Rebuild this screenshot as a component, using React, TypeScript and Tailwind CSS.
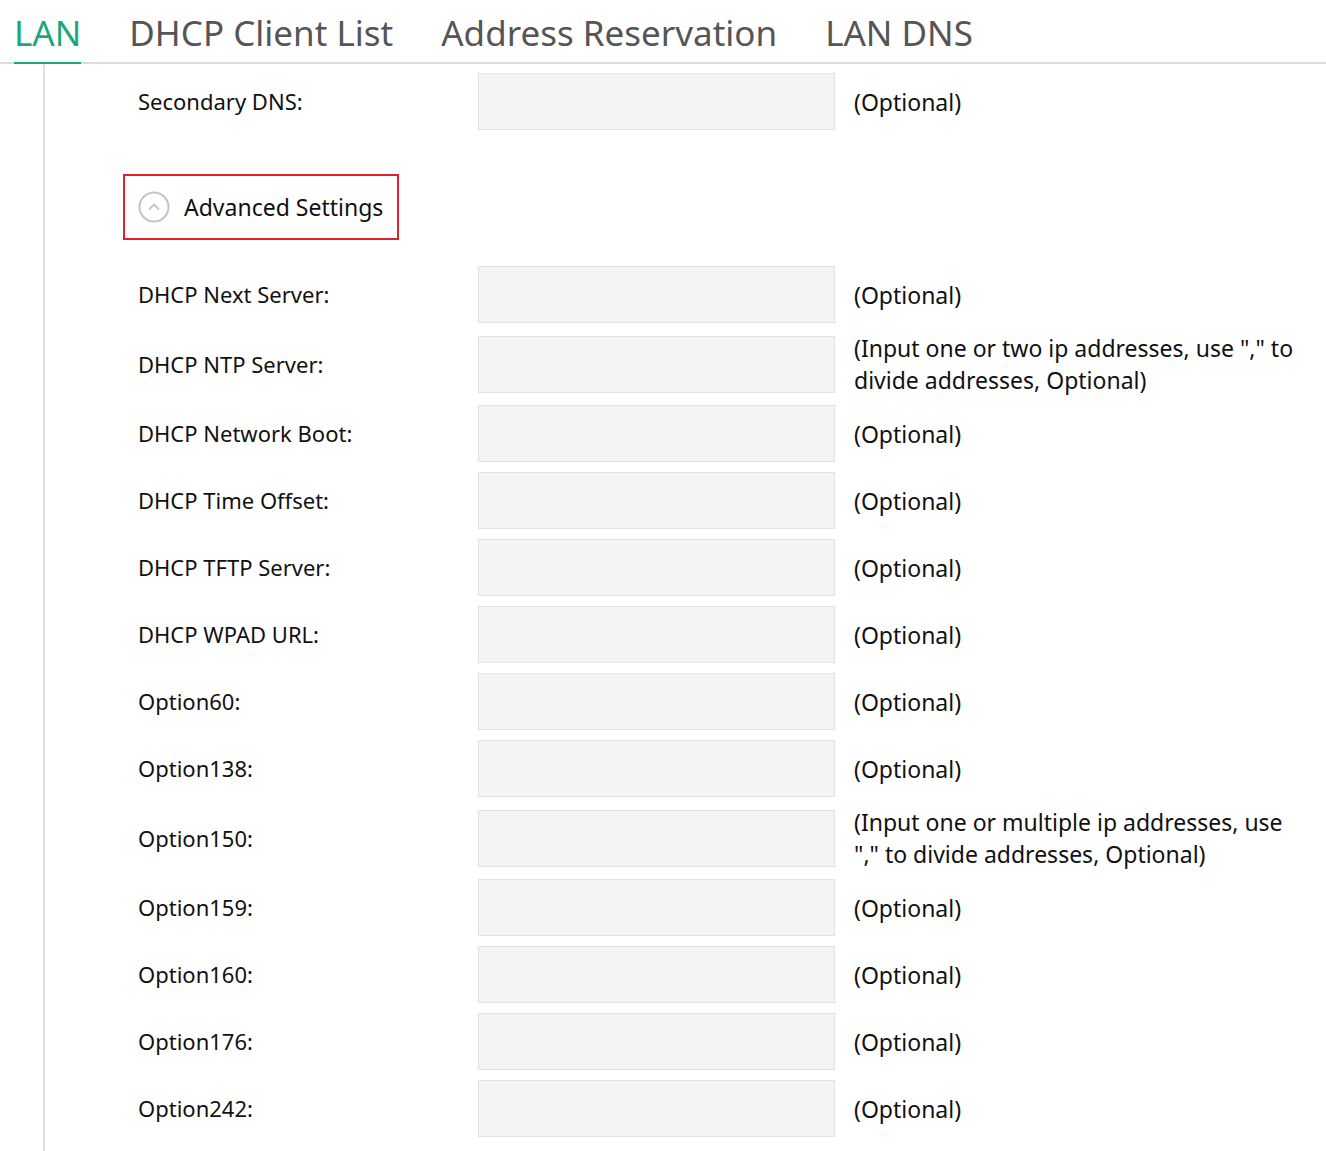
import React from "react";

const rows: [string, string, boolean?][] = [
  ["DHCP Next Server:", "(Optional)"],
  ["DHCP NTP Server:", '(Input one or two ip addresses, use "," to divide addresses, Optional)', true],
  ["DHCP Network Boot:", "(Optional)"],
  ["DHCP Time Offset:", "(Optional)"],
  ["DHCP TFTP Server:", "(Optional)"],
  ["DHCP WPAD URL:", "(Optional)"],
  ["Option60:", "(Optional)"],
  ["Option138:", "(Optional)"],
  ["Option150:", '(Input one or multiple ip addresses, use "," to divide addresses, Optional)', true],
  ["Option159:", "(Optional)"],
  ["Option160:", "(Optional)"],
  ["Option176:", "(Optional)"],
  ["Option242:", "(Optional)"],
];

function Row({ label, note, tall }: { label: string; note: string; tall?: boolean }) {
  return (
    <div className={`flex items-center ${tall ? "h-[62px]" : "h-[57px]"}`}>
      <div className="w-[433px] shrink-0 pl-[93px] text-[22px] text-[#111]">{label}</div>
      <div className="w-[357px] h-[57px] bg-[#f4f4f4] border border-[#e2e2e2] shrink-0" />
      <div className="w-[460px] shrink-0 pl-[19px] text-[23px] leading-[32px] text-[#111]">{note}</div>
    </div>
  );
}

export default function App() {
  return (
    <div className="w-[1326px] h-[1151px] bg-white overflow-hidden" style={{ fontFamily: '"Noto Sans", sans-serif' }}>
      <div className="flex items-end gap-[48px] pl-[14px] border-b-2 border-[#dcdcdc] h-[64px]">
        <div className="text-[35px] text-[#1aa97a] border-b-2 border-[#1aa97a] leading-[58px] -mb-[2px]">LAN</div>
        <div className="text-[35px] text-[#555] leading-[58px]">DHCP Client List</div>
        <div className="text-[35px] text-[#555] leading-[58px]">Address Reservation</div>
        <div className="text-[35px] text-[#555] leading-[58px]">LAN DNS</div>
      </div>
      <div className="ml-[43px] border-l-2 border-[#e0e0e0] h-[1087px] pt-[9px]">
        <Row label="Secondary DNS:" note="(Optional)" />
        <div className="pl-[78px] mt-[44px] mb-[26px]">
          <div className="inline-flex items-center gap-[14px] border-2 border-[#e0202e] h-[66px] w-[276px] pl-[13px]">
            <svg width="32" height="32" viewBox="0 0 32 32">
              <circle cx="16" cy="16" r="14.5" fill="none" stroke="#c4c4c4" strokeWidth="2" />
              <path d="M11 18.5 L16 13.5 L21 18.5" fill="none" stroke="#c4c4c4" strokeWidth="1.8" />
            </svg>
            <span className="text-[23px] text-[#111]">Advanced Settings</span>
          </div>
        </div>
        <div className="flex flex-col gap-[10px]">
          {rows.map(([l, n, t]) => (
            <Row key={l} label={l} note={n} tall={t} />
          ))}
        </div>
      </div>
    </div>
  );
}
